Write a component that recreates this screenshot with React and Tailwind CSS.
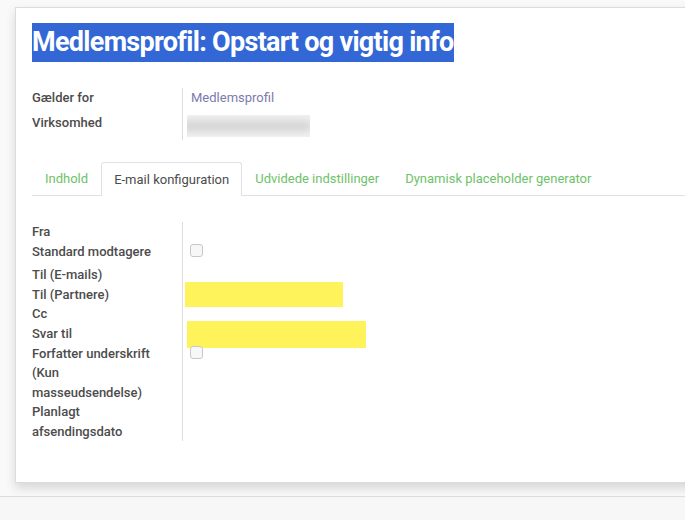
import React from 'react';

const tabs = [
    { label: 'Indhold', active: false },
    { label: 'E-mail konfiguration', active: true },
    { label: 'Udvidede indstillinger', active: false },
    { label: 'Dynamisk placeholder generator', active: false },
];

const Checkbox = ({ className = '' }) => (
    <div className={`w-[13px] h-[13px] rounded-[3px] border border-[#c8c8c8] bg-[#f7f7f7] ${className}`} />
);

export default function App() {
    return (
        <div
            className="w-[685px] h-[520px] overflow-hidden bg-[#f9f9f9] text-[#4c4c4c] flex flex-col"
            style={{ fontFamily: 'Roboto, "Noto Sans", sans-serif' }}
        >
            <div className="pt-[7px] pl-[15px]">
                <div className="w-[700px] h-[476px] bg-white border border-[#dcdcdc] shadow-[0_5px_10px_rgba(0,0,0,0.14)] pt-[15px] px-[16px]">
                    {/* title */}
                    <div className="inline-block bg-[#3367d6] text-white font-bold text-[27px] leading-[39px] h-[39px] tracking-[-0.7px]">
                        Medlemsprofil: Opstart og vigtig info
                    </div>

                    {/* top group */}
                    <div className="mt-[26px] flex text-[13px]">
                        <div className="w-[150px] font-medium">
                            <div className="h-[20px] leading-[20px]">Gælder for</div>
                            <div className="h-[26px] leading-[26px] mt-[2px]">Virksomhed</div>
                        </div>
                        <div className="border-l border-[#dcdcdc] h-[52px]">
                            <div className="h-[20px] leading-[20px] pl-[8px] text-[#7c7bad]">Medlemsprofil</div>
                            <div className="ml-[4px] mt-[7px] w-[123px] h-[22px] overflow-hidden bg-[#f3f3f3] relative">
                                <div className="absolute left-[-6px] right-[-2px] top-[6px] h-[10px] bg-[#cfcfcf] blur-[5px]" />
                            </div>
                        </div>
                    </div>

                    {/* tabs */}
                    <div className="mt-[22px] flex border-b border-[#dee2e6] text-[13px] h-[34px]">
                        {tabs.map((t) => (
                            <div
                                key={t.label}
                                className={
                                    t.active
                                        ? 'px-[12px] h-[34px] leading-[33px] border border-b-0 border-[#dee2e6] rounded-t-[3px] bg-white text-[#4c4c4c] -mb-px'
                                        : 'px-[13px] h-[33px] leading-[33px] text-[#6ec26a]'
                                }
                            >
                                {t.label}
                            </div>
                        ))}
                    </div>

                    {/* email config group */}
                    <div className="mt-[26px] flex text-[13px]">
                        <div className="w-[150px] font-medium leading-[19.6px]">
                            <div>Fra</div>
                            <div>Standard modtagere</div>
                            <div className="mt-[4px]">Til (E-mails)</div>
                            <div>Til (Partnere)</div>
                            <div>Cc</div>
                            <div>Svar til</div>
                            <div className="w-[118px]">Forfatter underskrift (Kun masseudsendelse)</div>
                            <div className="w-[100px]">Planlagt afsendingsdato</div>
                        </div>
                        <div className="border-l border-[#dcdcdc] h-[219px] flex flex-col items-start">
                            <Checkbox className="mt-[22px] ml-[7px]" />
                            <div className="mt-[25px] ml-[2px] w-[158px] h-[25px] bg-[#fff35c]" />
                            <div className="mt-[14px] ml-[4px] w-[179px] h-[27px] bg-[#fff35c]" />
                            <Checkbox className="mt-[-2px] ml-[7px] relative" />
                        </div>
                    </div>
                </div>
            </div>
            <div className="mt-[13px] border-t border-[#dcdcdc] flex-1 bg-[#f7f7f7]" />
        </div>
    );
}
